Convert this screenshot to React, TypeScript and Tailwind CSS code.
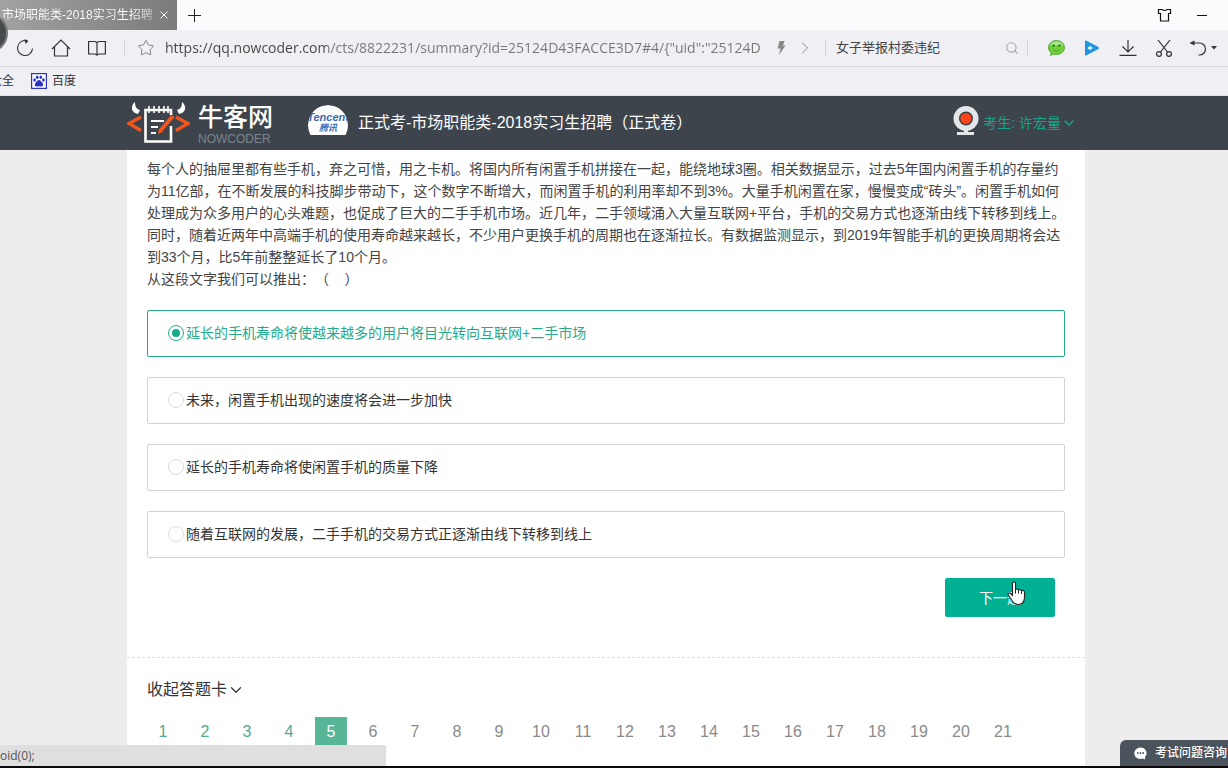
import { useState } from 'react'
import type { ReactNode } from 'react'
import { ChevronDown, ChevronRight, Search, Star } from 'lucide-react'

const options = [
  '延长的手机寿命将使越来越多的用户将目光转向互联网+二手市场',
  '未来，闲置手机出现的速度将会进一步加快',
  '延长的手机寿命将使闲置手机的质量下降',
  '随着互联网的发展，二手手机的交易方式正逐渐由线下转移到线上',
]

const questionCount = 21
const current = 5

function ToolButton({ label, children }: { label: string; children: ReactNode }) {
  return (
    <button aria-label={label} className="flex h-9 w-9 shrink-0 items-center justify-center text-[#333]">
      {children}
    </button>
  )
}

function Divider() {
  return <span className="h-4 w-px shrink-0 bg-[#d4d4da]" />
}

function TabBar() {
  return (
    <div className="flex h-[30px] items-center bg-[#fbfbfd]">
      <div className="flex h-full w-[177px] items-center bg-linear-to-r from-[#a3a2a2] to-[#7c7b7b] pl-[2px] text-white">
        <span className="w-[153px] overflow-hidden bg-linear-to-r from-white from-85% to-white/40 bg-clip-text text-xs whitespace-nowrap text-transparent">
          市场职能类-2018实习生招聘
        </span>
        <button aria-label="关闭标签页" className="ml-1">
          <svg width="10" height="10" viewBox="0 0 10 10" stroke="currentColor" fill="none"><path d="M1.500 1.500l7 7M8.500 1.500l-7 7" /></svg>
        </button>
      </div>
      <button aria-label="新建标签页" className="ml-[11px]">
        <svg width="13" height="13" viewBox="0 0 13 13" stroke="#222" fill="none"><path d="M6.500 0v13M0 6.500h13" /></svg>
      </button>
      <div className="ml-auto flex items-center gap-6 pr-5">
        <button aria-label="皮肤">
          <svg width="15" height="14" viewBox="0 0 15 14" stroke="#111" fill="none"><path d="M1.500 1.500h3.500q2.500 2 5 0h3.500v4h-2v7.500h-8v-7.500h-2z" strokeWidth="1.200" /></svg>
        </button>
        <button aria-label="最小化">
          <svg width="12" height="12" viewBox="0 0 12 12"><path d="M1 6.500h10" stroke="#111" /></svg>
        </button>
      </div>
    </div>
  )
}

function Toolbar() {
  return (
    <div className="flex h-[37px] items-center border-b border-[#d8d8de] bg-[#efeff4] pl-[7px]">
      <ToolButton label="刷新">
        <svg width="18" height="18" viewBox="0 0 18 18" fill="none" stroke="currentColor" strokeWidth="1.100">
          <path d="M16.500 9.500a7.500 7.500 0 1 1-5.500-7.700" />
          <path d="M8.500 0l4 2-3 3z" fill="currentColor" stroke="none" />
        </svg>
      </ToolButton>
      <ToolButton label="主页">
        <svg width="20" height="18" viewBox="0 0 20 18" fill="none" stroke="currentColor" strokeWidth="1.200"><path d="M1 10L10 1l9 9M3.500 8v9h13V8" /></svg>
      </ToolButton>
      <ToolButton label="收藏夹">
        <svg width="18" height="16" viewBox="0 0 18 16" fill="none" stroke="currentColor" strokeWidth="1.200"><path d="M9 2v13M.6 1.500H7L9 2.500l2-1h6.400v12.500H11l-2 1-2-1H.6z" /></svg>
      </ToolButton>
      <div className="ml-[9px] flex min-w-0 flex-1 items-center gap-3">
        <Divider />
        <Star size={18} strokeWidth={1.2} className="shrink-0 text-[#777]" />
        <input
          aria-label="地址"
          defaultValue={'https://qq.nowcoder.com/cts/8822231/summary?id=25124D43FACCE3D7#4/{"uid":"25124D'}
          className="-ml-[2px] mr-1 min-w-0 flex-1 bg-linear-to-r from-[#444] from-[162px] to-[#777] to-[162px] bg-clip-text font-['Open_Sans','Noto_Sans_CJK_SC',sans-serif] text-sm text-transparent outline-none"
        />
      </div>
      <button aria-label="极速模式" className="flex w-6 justify-center">
        <svg width="9" height="14" viewBox="0 0 9 14" fill="#888"><path d="M2.500 0h5L6 4.500h2.500L2 14l1.500-6.500H.5z" /></svg>
      </button>
      <button aria-label="前往" className="mr-2 flex w-6 justify-center text-[#888]"><ChevronRight size={20} strokeWidth={1.2} /></button>
      <Divider />
      <div className="flex w-[201px] items-center pr-2 pl-[10px]">
        <input aria-label="搜索" placeholder="女子举报村委违纪" className="min-w-0 flex-1 text-[13px] outline-none placeholder:text-[#444]" />
        <Search size={14} strokeWidth={2} className="text-[#aaa]" />
      </div>
      <Divider />
      <div className="ml-[10px] flex">
        <ToolButton label="微信">
          <svg width="17" height="16" viewBox="0 0 17 16">
            <path d="M8.500.5c4.400 0 8 3 8 7s-3.600 7-8 7c-1 0-2-.1-2.800-.4L2.500 15.500l.5-2.800C1.400 11.400.5 9.600.5 7.500c0-4 3.600-7 8-7z" fill="#6fce3c" stroke="#4b9a2c" strokeWidth=".8" />
            <path d="M2 6C3 2 6 1.500 8.500 1.500S14 2 15 6C11 4.500 6 4.500 2 6z" fill="#a5e88a" />
            <circle cx="5.500" cy="5.500" r="1.100" fill="#1c4a10" /><circle cx="11.500" cy="5.500" r="1.100" fill="#1c4a10" />
            <path d="M5 10q3.500 2 7 0" stroke="#4b9a2c" strokeWidth=".8" fill="none" />
          </svg>
        </ToolButton>
        <ToolButton label="视频">
          <svg width="16" height="16" viewBox="0 0 16 16">
            <path d="M2 .5Q1 0 1 1.500v13Q1 16 2 15.500L14.500 9q1-1 0-2z" fill="#1e96e0" />
            <path d="M3.500 8l3-2.500v1.700h2v1.600h-2v1.700z" fill="#fff" />
          </svg>
        </ToolButton>
        <ToolButton label="下载">
          <svg width="18" height="16" viewBox="0 0 18 16" fill="none" stroke="currentColor" strokeWidth="1.200"><path d="M9 0v12M3.500 6.500L9 12l5.500-5.500M.5 15.300h17" /></svg>
        </ToolButton>
        <ToolButton label="截图">
          <svg width="16" height="17" viewBox="0 0 16 17" fill="none" stroke="currentColor" strokeWidth="1.200">
            <path d="M2 0l9.500 12M14 0L4.500 12" /><circle cx="3" cy="14" r="2.400" /><circle cx="13" cy="14" r="2.400" />
          </svg>
        </ToolButton>
        <button aria-label="恢复" className="flex h-9 w-[46px] items-center gap-1 pl-[7px] text-[#333]">
          <svg width="18" height="17" viewBox="0 0 18 17" fill="none" stroke="currentColor" strokeWidth="1.200">
            <path d="M3 3h7.500a6 6 0 1 1 0 12H9.500" /><path d="M.5 3l5-2.500v5z" fill="currentColor" stroke="none" />
          </svg>
          <svg width="6" height="4" viewBox="0 0 6 4" fill="currentColor"><path d="M0 0h6L3 3.500z" /></svg>
        </button>
      </div>
    </div>
  )
}

function Bookmarks() {
  return (
    <nav className="flex h-[29px] items-center border-b border-[#dedfe4] bg-[#efeff4] text-xs text-[#333]">
      <a href="#all" className="-ml-[10px]">大全</a>
      <a href="#baidu" className="ml-[17px] flex items-center gap-[5px]">
        <svg width="16" height="16" viewBox="0 0 16 16">
          <rect x=".6" y=".6" width="14.800" height="14.800" fill="#fff" stroke="#2a33c4" strokeWidth="1.200" />
          <g fill="#2a33c4">
            <ellipse cx="3.600" cy="7" rx="1.300" ry="1.700" /><ellipse cx="6.200" cy="4.200" rx="1.300" ry="1.800" />
            <ellipse cx="9.800" cy="4.200" rx="1.300" ry="1.800" /><ellipse cx="12.400" cy="7" rx="1.300" ry="1.700" />
            <path d="M8 7c1.700 0 2 1.500 3.200 2.600s1.600 3.900-.9 3.900c-1 0-1.500-.3-2.300-.3s-1.300.3-2.300.3c-2.500 0-2.100-2.800-.9-3.900S6.300 7 8 7z" />
          </g>
        </svg>
        百度
      </a>
    </nav>
  )
}

function NowcoderLogo() {
  return (
    <a href="#home" aria-label="牛客网" className="flex items-center gap-2">
      <svg width="63" height="42" viewBox="0 0 63 42" fill="none">
        <path d="M8 0C3 4 4 11 11 12l2-4C9 7 8 4 8 0zM55 0c5 4 4 11-3 12l-2-4c4-1 5-4 5-8z" fill="#fff" />
        <path d="M14 15L2 21.500 14 28.500M49 15l12 6.500L49 28.500" stroke="#f0561e" strokeWidth="3.400" />
        <path d="M44 24v15.500H18.500V8H44v5" stroke="#fff" strokeWidth="2.600" />
        <path d="M22 4v7M27 4v7M32 4v7M37 4v7M41 4v7" stroke="#fff" strokeWidth="1.600" />
        <path d="M24 19h13M24 25h7M24 31h5" stroke="#fff" strokeWidth="2" />
        <path d="M46 14L33 29" stroke="#f0561e" strokeWidth="4" /><path d="M32 27l4 3-5 2z" fill="#f0561e" />
      </svg>
      <span className="flex flex-col pt-[3px]">
        <span className="text-[25px] leading-7 font-medium text-white">牛客网</span>
        <span className="text-xs leading-4 text-[#7d858c]">NOWCODER</span>
      </span>
    </a>
  )
}

function ExamHeader() {
  return (
    <header className="bg-[#3d444c] pr-4">
      <div className="mx-auto flex h-[54px] max-w-[958px] items-center">
        <NowcoderLogo />
        <div className="mb-[6px] ml-[35px] h-[30px] w-10 overflow-hidden rounded-t-full">
          <div className="flex h-10 flex-col items-center rounded-full bg-white pt-[6px] font-bold text-[#3a6ab0] italic">
            <span className="text-[11px] leading-3">Tencent</span>
            <span className="text-[9px] leading-[10px]">腾讯</span>
          </div>
        </div>
        <h1 className="ml-[10px] text-base text-white">正式考-市场职能类-2018实习生招聘（正式卷）</h1>
        <div className="mr-2 ml-auto flex items-center gap-1 text-sm text-[#17a589]">
          <svg width="26" height="30" viewBox="0 0 26 30" className="mb-1">
            <path d="M11 22h4v4h6v3H4v-3h7z" fill="#e4e7ea" />
            <circle cx="13" cy="12.500" r="12.500" fill="#e4e7ea" /><circle cx="13" cy="12.500" r="7" fill="#3a3f45" /><circle cx="13" cy="12.500" r="5.600" fill="#f9431b" />
          </svg>
          <button className="flex items-center">考生: 许宏量 <ChevronDown size={16} /></button>
        </div>
      </div>
    </header>
  )
}

function AnswerCard() {
  return (
    <section className="border-t border-dashed border-[#ddd] px-5 pt-5">
      <button className="flex items-center text-base text-[#333]">收起答题卡 <ChevronDown size={18} strokeWidth={1.6} /></button>
      <div className="mt-[15px] flex flex-wrap gap-[10px]">
        {Array.from({ length: questionCount }, (_, i) => i + 1).map((n) => (
          <button
            key={n}
            className={`h-[30px] w-8 text-base ${n === current ? 'bg-[#57b598] text-white' : n < current ? 'text-[#57a98c]' : 'text-[#8a8a8a]'}`}
          >
            {n}
          </button>
        ))}
      </div>
    </section>
  )
}

export default function App() {
  const [selected, setSelected] = useState(0)

  return (
    <div className="relative flex h-screen flex-col overflow-hidden bg-[#ededed] font-['Liberation_Sans','Noto_Sans_CJK_SC',sans-serif]">
      <TabBar />
      <Toolbar />
      <Bookmarks />
      <ExamHeader />

      <main className="min-h-0 flex-1 overflow-hidden pr-4">
        <div className="mx-auto min-h-full max-w-[958px] bg-white">
          <form className="px-5 pt-2 pb-10" onSubmit={(e) => e.preventDefault()}>
            <div className="-mr-1 text-sm leading-[22px] text-[#444] [text-spacing-trim:space-all]">
              <p>
                每个人的抽屉里都有些手机，弃之可惜，用之卡机。将国内所有闲置手机拼接在一起，能绕地球3圈。相关数据显示，过去5年国内闲置手机的存量约为11亿部，在不断发展的科技脚步带动下，这个数字不断增大，而闲置手机的利用率却不到3%。大量手机闲置在家，慢慢变成“砖头”。闲置手机如何处理成为众多用户的心头难题，也促成了巨大的二手手机市场。近几年，二手领域涌入大量互联网+平台，手机的交易方式也逐渐由线下转移到线上。同时，随着近两年中高端手机的使用寿命越来越长，不少用户更换手机的周期也在逐渐拉长。有数据监测显示，到2019年智能手机的更换周期将会达到33个月，比5年前整整延长了10个月。
              </p>
              <p>从这段文字我们可以推出：（&nbsp;&nbsp;&nbsp;&nbsp;）</p>
            </div>

            <div className="mt-5 flex flex-col gap-5">
              {options.map((text, i) => (
                <label
                  key={text}
                  className={`flex h-[47px] items-center gap-[2px] rounded-xs border px-5 pb-[2px] text-sm ${i === selected ? 'border-[#27a88a] text-[#25a98b]' : 'border-[#d2d2d2] text-[#333]'}`}
                >
                  <input
                    type="radio"
                    name="answer"
                    checked={i === selected}
                    onChange={() => setSelected(i)}
                    className="h-4 w-4 appearance-none rounded-full border border-[#ddd] bg-white checked:border-[#25a98b] checked:bg-[#14ab8a] checked:bg-clip-content checked:p-[3px]"
                  />
                  {text}
                </label>
              ))}
            </div>

            <div className="mt-5 flex justify-end pr-[10px]">
              <button className="relative h-[39px] w-[110px] rounded-xs bg-[#00b093] text-sm text-white">
                下一题
                <svg width="20" height="25" viewBox="0 0 20 25" className="absolute top-[3px] left-[62px]">
                  <path
                    d="M5.500 2.500C5.500.5 8.500.5 8.500 2.500V9c.5-1.500 2.800-1.300 3 .3.700-1.200 2.700-.9 3 .6.800-1 3-.6 3 1.300V16c0 4-2 7.500-6.500 7.500-4 0-5.500-2.500-7-5.500L1.300 14c-.8-1.600 1-2.800 2.400-1.500l1.800 2z"
                    fill="#fff" stroke="#222" strokeWidth="1.100"
                  />
                  <path d="M8.500 9v3.500M11.500 9.500v3M14.500 10.500v2.500" stroke="#222" />
                </svg>
              </button>
            </div>
          </form>
          <AnswerCard />
        </div>
      </main>

      <div className="h-[2px] bg-[#0c0a0a]" />

      {/* 悬浮层 */}
      <div className="absolute top-[13px] -left-[32px] h-10 w-10 rounded-full border-2 border-[#777] bg-[#464a4d]" />
      <div className="absolute bottom-[2px] left-0 h-[21px] w-[386px] overflow-hidden rounded-tr-xs bg-[#dfdfdf] font-['Open_Sans',sans-serif] text-xs leading-[22px] text-[#555]">
        oid(0);
      </div>
      <button className="absolute right-0 bottom-[2px] flex h-[26px] w-[108px] items-center gap-2 rounded-tl-md bg-[#4b545d] pl-[14px] text-xs font-medium whitespace-nowrap text-white">
        <svg width="13" height="13" viewBox="0 0 13 13" className="shrink-0">
          <path d="M6.500.5a6 5.700 0 0 1 4.500 9.500v2.500L8.500 11.500A6 5.700 0 1 1 6.500.5z" fill="#fff" />
          <circle cx="3.800" cy="6" r=".9" fill="#4b545d" /><circle cx="6.500" cy="6" r=".9" fill="#4b545d" /><circle cx="9.200" cy="6" r=".9" fill="#4b545d" />
        </svg>
        考试问题咨询
      </button>
    </div>
  )
}
